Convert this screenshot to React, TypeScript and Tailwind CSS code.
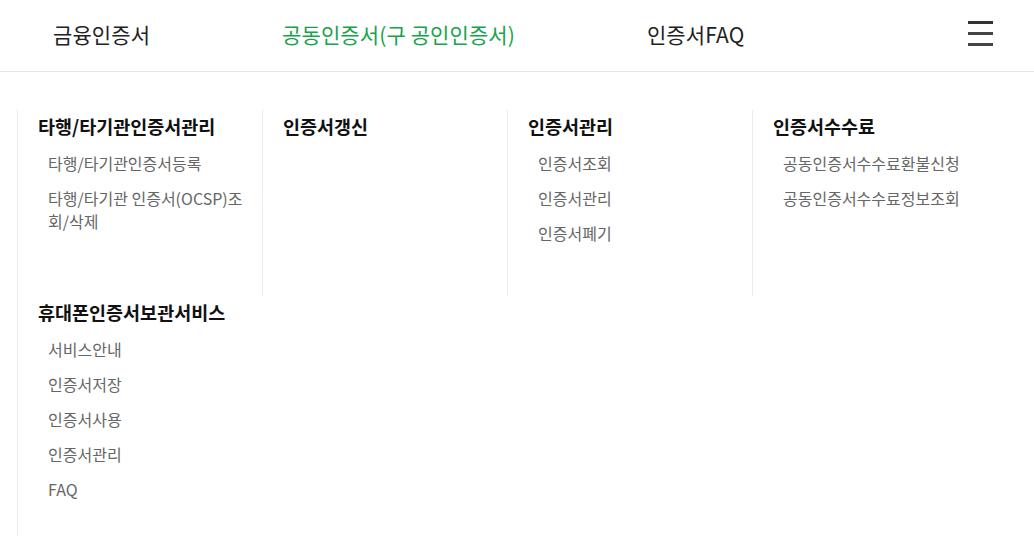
import React from 'react';

const FONT = { fontFamily: '"Noto Sans CJK KR", "Noto Sans", sans-serif' };

type Group = { title: string; items: string[] };

const groups: Group[] = [
  { title: '타행/타기관인증서관리', items: ['타행/타기관인증서등록', '타행/타기관 인증서(OCSP)조회/삭제'] },
  { title: '인증서갱신', items: [] },
  { title: '인증서관리', items: ['인증서조회', '인증서관리', '인증서폐기'] },
  { title: '인증서수수료', items: ['공동인증서수수료환불신청', '공동인증서수수료정보조회'] },
  { title: '휴대폰인증서보관서비스', items: ['서비스안내', '인증서저장', '인증서사용', '인증서관리', 'FAQ'] },
];

export default function App() {
  return (
    <div className="min-h-screen bg-white" style={FONT}>
      {/* top nav */}
      <header className="h-[72px] border-b border-[#e6e6e6] flex items-center pl-[53px] pr-[41px]">
        <nav className="flex items-center gap-[132px] text-[21px] tracking-[0.1px] flex-1 pb-[1px]">
          <a className="text-[#222]">금융인증서</a>
          <a className="text-[#17a34a]">공동인증서(구 공인인증서)</a>
          <a className="text-[#222]">인증서FAQ</a>
        </nav>
        <button className="w-[25px] flex flex-col gap-[8px] mb-[5px]">
          <span className="block h-[3px] bg-[#333]" />
          <span className="block h-[3px] bg-[#444]" />
          <span className="block h-[3px] bg-[#444]" />
        </button>
      </header>

      {/* sitemap */}
      <div className="pt-[38px] pl-[17px]">
        <div className="grid grid-cols-4 w-[980px]">
          {groups.map((g, i) => (
            <div key={i} className="border-l border-[#ebebeb] pl-[20px] pr-[14px] pt-[4px] pb-[51px]">
              <h3 className="text-[18.5px] font-bold leading-[24px] text-[#111] mb-[14px]">{g.title}</h3>
              <ul className="flex flex-col gap-[12px] pl-[10px]">
                {g.items.map((it, j) => (
                  <li key={j} className="text-[16px] leading-[23px] text-[#666]">{it}</li>
                ))}
              </ul>
            </div>
          ))}
        </div>
      </div>
    </div>
  );
}
